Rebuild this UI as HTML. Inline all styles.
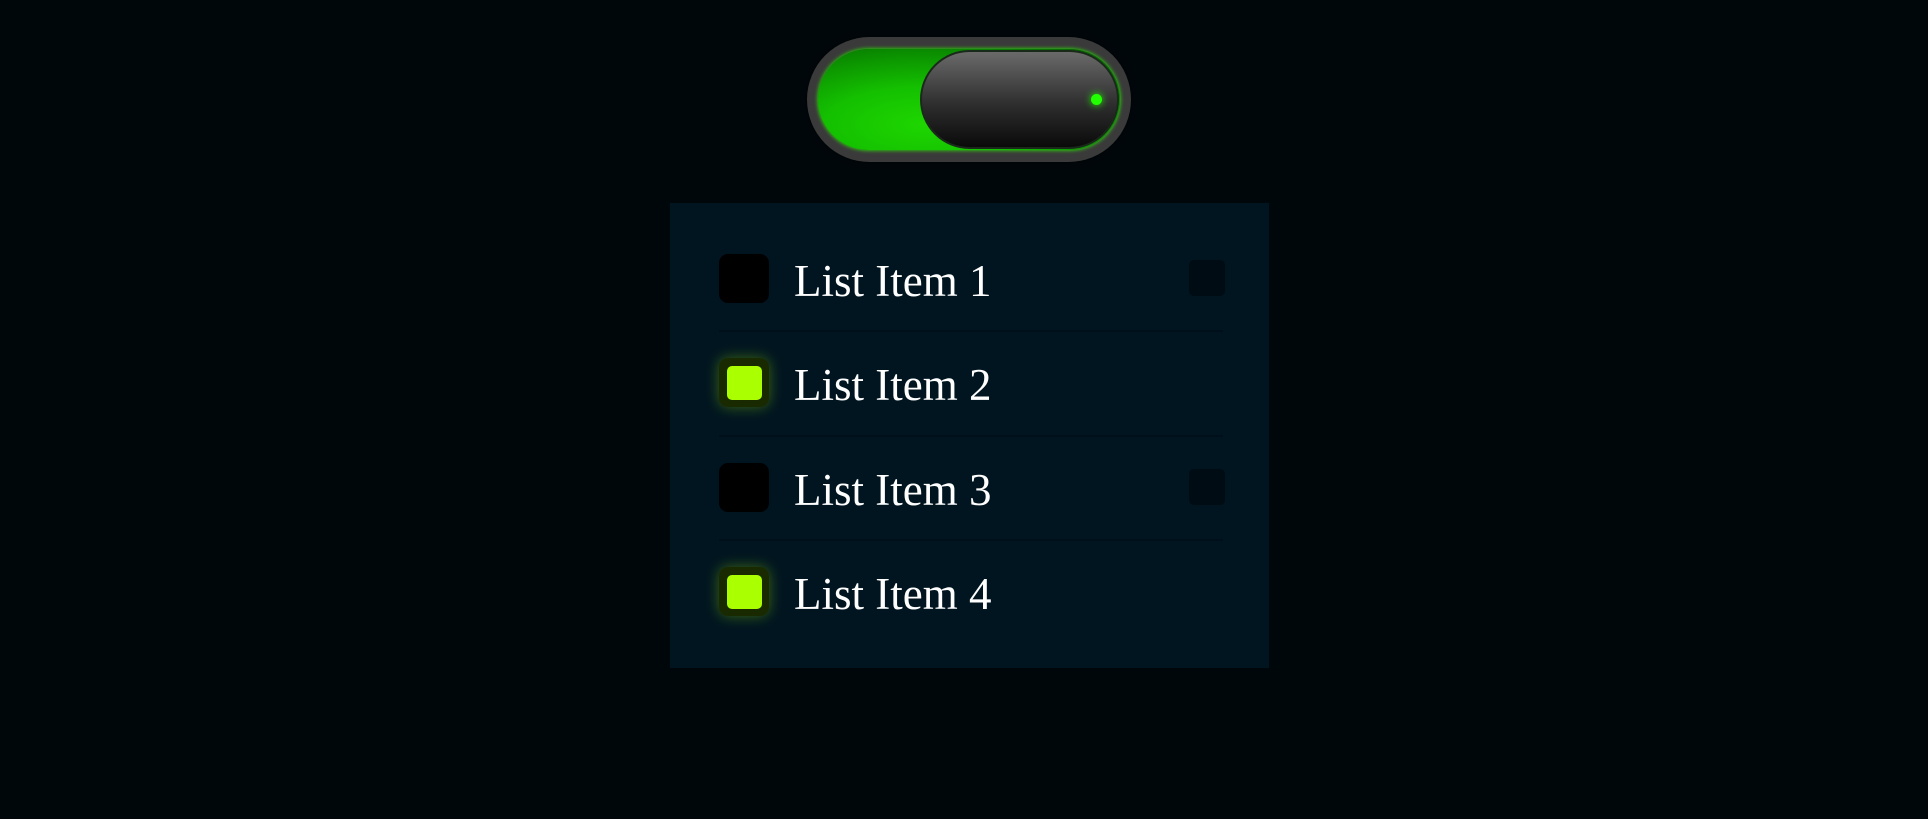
<!DOCTYPE html>
<html><head><style>
html,body{margin:0;padding:0}
body{width:1928px;height:819px;background:#00070b;position:relative;overflow:hidden;font-family:"Liberation Serif",serif}
.tog{position:absolute;left:807px;top:37px;width:324px;height:125px;border-radius:63px;background:#3a3a3a;box-shadow:0 0 6px rgba(0,0,0,.6)}
.track{position:absolute;left:11px;top:12px;width:302px;height:101px;border-radius:51px;background:radial-gradient(ellipse at 35% 75%,#1ed600 0%,#14c000 35%,#0a8a00 70%,#045500 100%);box-shadow:0 0 4px #2cff00}
.knob{position:absolute;left:113px;top:13px;width:199px;height:99px;border-radius:50px;background:linear-gradient(#6a6a6a,#2e2e2e 55%,#0a0a0a);border:2px solid #1a2a1a;box-sizing:border-box}
.dot{position:absolute;left:284px;top:57px;width:11px;height:11px;border-radius:50%;background:#22ff00;box-shadow:0 0 8px #22ff00}
.panel{position:absolute;left:670px;top:203px;width:599px;height:465px;background:#001520}
.row{position:absolute;left:49px;width:505px;height:104px}
.cb{position:absolute;left:0;top:26px;width:50px;height:49px;border-radius:9px;background:#000}
.cb.on{background:#1a2a00;box-shadow:0 0 14px rgba(170,255,0,.35)}
.cb.on::after{content:"";position:absolute;left:8px;top:8px;width:35px;height:34px;border-radius:5px;background:#aaff00}
.t{position:absolute;left:75px;top:25px;font-size:45px;color:#fff;line-height:56px}
.sq{position:absolute;left:470px;top:32px;width:36px;height:36px;border-radius:5px;background:#000c14}
.div{position:absolute;left:49px;width:504px;height:2px;background:#00101a}
</style></head><body>
<div class="tog"><div class="track"></div><div class="knob"></div><div class="dot"></div></div>
<div class="panel">
<div class="row" style="top:25px"><div class="cb"></div><div class="t">List Item 1</div><div class="sq"></div></div>
<div class="div" style="top:127px"></div>
<div class="row" style="top:129px"><div class="cb on"></div><div class="t">List Item 2</div></div>
<div class="div" style="top:232px"></div>
<div class="row" style="top:234px"><div class="cb"></div><div class="t">List Item 3</div><div class="sq"></div></div>
<div class="div" style="top:336px"></div>
<div class="row" style="top:338px"><div class="cb on"></div><div class="t">List Item 4</div></div>
</div>
</body></html>
